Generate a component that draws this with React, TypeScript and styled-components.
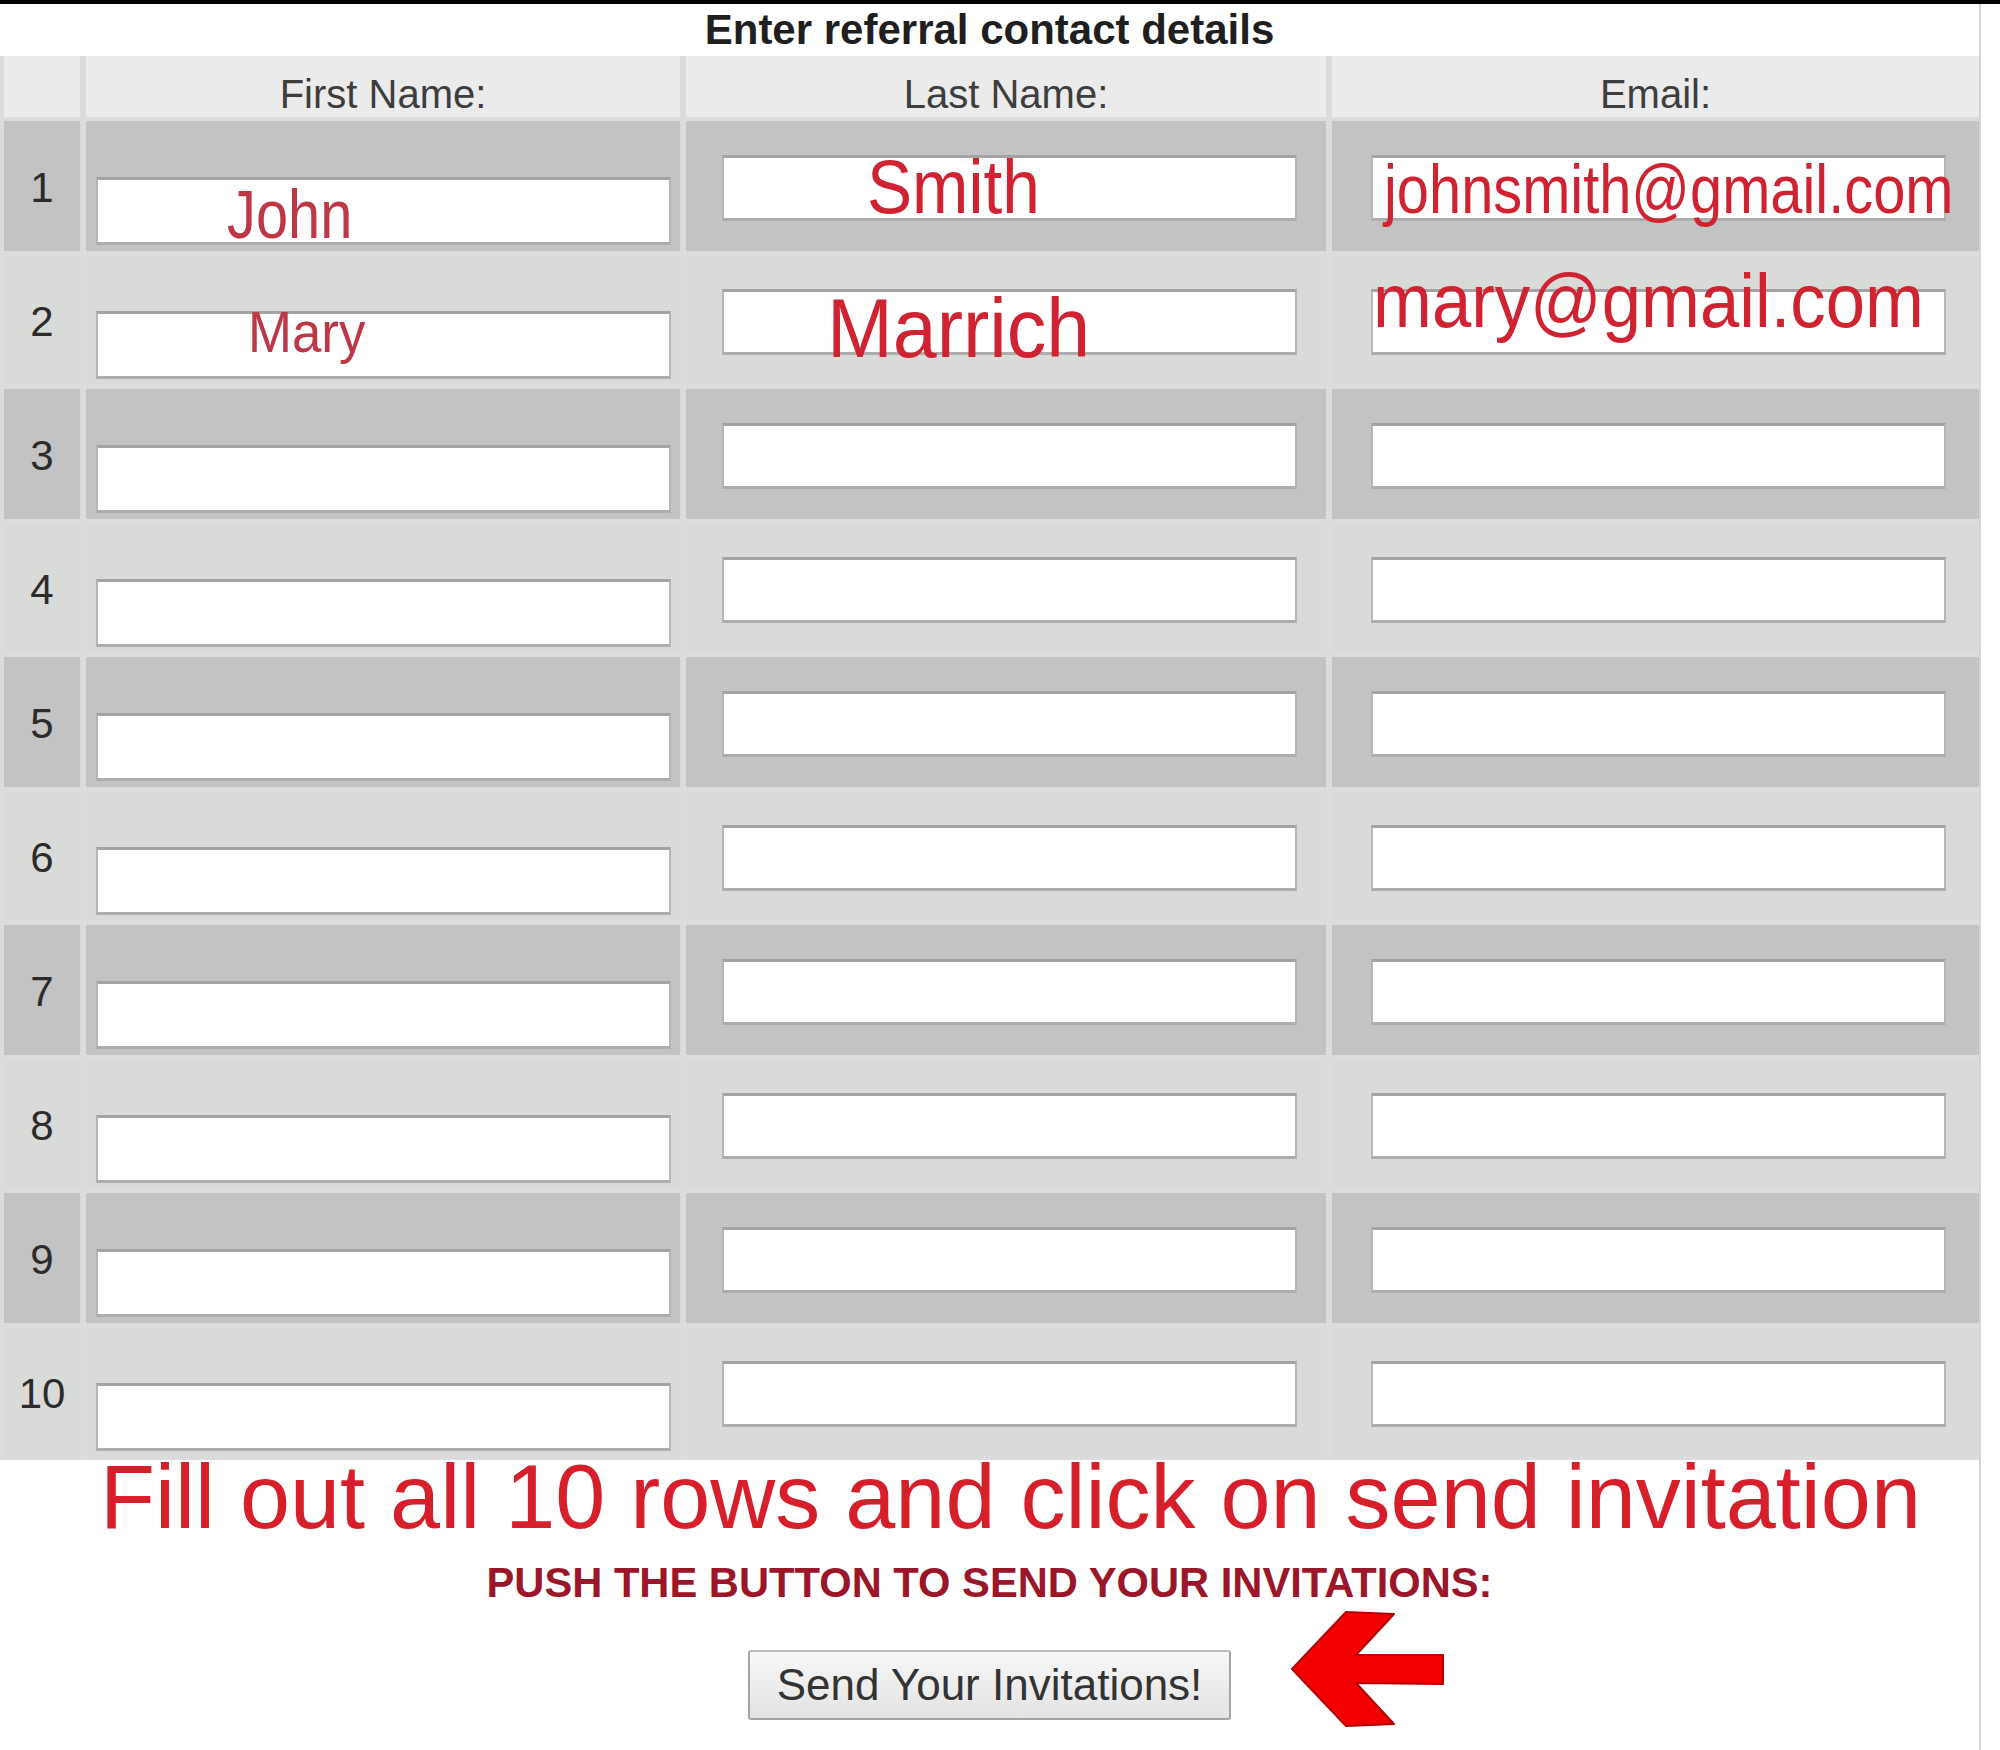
import React from "react";
import styled, { createGlobalStyle } from "styled-components";

const GlobalStyle = createGlobalStyle`
  html, body { margin: 0; padding: 0; background: #ffffff; }
  body { font-family: "Liberation Sans", Arial, sans-serif; }
  *, *::before, *::after { box-sizing: border-box; }
`;

const Page = styled.div`
  width: 2000px;
  min-height: 1750px;
  background: #ffffff;
  border-top: 4px solid #000000;
`;

const Sheet = styled.main`
  width: 1981px;
  min-height: 1746px;
  border-right: 2px solid #d4d4d4;
  display: flex;
  flex-direction: column;
`;

const Title = styled.h1`
  margin: 0;
  height: 52px;
  line-height: 52px;
  text-align: center;
  font-size: 42px;
  font-weight: 700;
  color: #1f1f1f;
`;

const Table = styled.div`
  display: flex;
  flex-direction: column;
  gap: 4px;
  padding-bottom: 3px;
  background: #dcdcdc;
`;

const Row = styled.div<{ $header?: boolean }>`
  display: grid;
  grid-template-columns: 76px 594px 640px 1fr;
  column-gap: 6px;
  padding-left: 4px;
  height: ${(p) => (p.$header ? 61 : 130)}px;
`;

const HeaderCell = styled.div`
  background: #ebebeb;
  display: flex;
  justify-content: center;
  align-items: center;
  padding-top: 14px;
  font-size: 40px;
  line-height: 40px;
  color: #3d3d3d;
`;

const NumCell = styled.div<{ $dark: boolean }>`
  background: ${(p) => (p.$dark ? "#c3c3c3" : "#d9dbd9")};
  display: flex;
  justify-content: center;
  align-items: center;
  padding-top: 4px;
  font-size: 42px;
  line-height: 42px;
  color: #2b2b2b;
`;

const FieldCell = styled.div<{ $dark: boolean; $low?: boolean; $inset: number }>`
  background: ${(p) => (p.$dark ? "#c3c3c3" : "#d9dbd9")};
  display: flex;
  align-items: ${(p) => (p.$low ? "flex-end" : "flex-start")};
  padding-left: ${(p) => p.$inset}px;
  padding-top: ${(p) => (p.$low ? 0 : 34)}px;
  padding-bottom: ${(p) => (p.$low ? 6 : 0)}px;
`;

const Field = styled.div<{ $tall?: boolean }>`
  width: 575px;
  height: ${(p) => (p.$tall ? 68 : 66)}px;
  background: #ffffff;
  border: 2px solid #b6b6b6;
  border-top: 3px solid #a3a3a3;
  border-bottom: 3px solid #adadad;
  display: flex;
  align-items: flex-start;
  overflow: visible;
`;

const Value = styled.span<{ $size: number; $scale: number; $x: number; $y: number; $muted?: boolean }>`
  flex-shrink: 0;
  white-space: nowrap;
  font-size: ${(p) => p.$size}px;
  line-height: 1;
  margin-left: ${(p) => p.$x}px;
  margin-top: ${(p) => p.$y}px;
  color: ${(p) => (p.$muted ? "#bd3747" : "#cf2331")};
  transform: scaleX(${(p) => p.$scale});
  transform-origin: left top;
`;

const Note = styled.p`
  margin: -3px 0 0;
  padding-left: 42px;
  text-align: center;
  font-size: 90px;
  line-height: 80px;
  color: #d61f2b;
  white-space: nowrap;
`;

const Push = styled.p`
  margin: 25px 0 0;
  text-align: center;
  font-size: 41.7px;
  line-height: 41px;
  font-weight: 700;
  color: #9c1629;
  white-space: nowrap;
`;

const ButtonRow = styled.div`
  margin-top: 47px;
  display: grid;
  grid-template-columns: 1fr auto 1fr;
`;

const SendButton = styled.button`
  grid-column: 2;
  width: 483px;
  height: 70px;
  padding: 0;
  border: 2px solid #a4a4a4;
  border-top-color: #bdbdbd;
  border-radius: 3px;
  background: linear-gradient(#f7f7f7, #e3e3e3);
  font-family: "Liberation Sans", Arial, sans-serif;
  font-size: 44px;
  color: #333333;
  cursor: pointer;
`;

const Arrow = styled.svg`
  grid-column: 3;
  justify-self: start;
  align-self: start;
  margin-left: 59px;
  margin-top: -42px;
  width: 155px;
  height: 122px;
`;

type Entry = { text: string; size: number; scale: number; x: number; y: number; muted?: boolean };
type RowData = { first?: Entry; last?: Entry; email?: Entry };

const rows: RowData[] = [
  {
    first: { text: "John", size: 68, scale: 0.85, x: 129, y: 0, muted: true },
    last: { text: "Smith", size: 76, scale: 0.89, x: 143, y: -9 },
    email: { text: "johnsmith@gmail.com", size: 68, scale: 0.85, x: 11, y: -3 },
  },
  {
    first: { text: "Mary", size: 58, scale: 0.91, x: 150, y: -11, muted: true },
    last: { text: "Marrich", size: 84, scale: 0.94, x: 103, y: -6 },
    email: { text: "mary@gmail.com", size: 76, scale: 0.93, x: 0, y: -29 },
  },
  {}, {}, {}, {}, {}, {}, {}, {},
];

const Val = ({ e }: { e?: Entry }) =>
  e ? (
    <Value $size={e.size} $scale={e.scale} $x={e.x} $y={e.y} $muted={e.muted}>
      {e.text}
    </Value>
  ) : null;

export default function App() {
  return (
    <Page>
      <GlobalStyle />
      <Sheet>
        <Title>Enter referral contact details</Title>
        <Table>
          <Row $header>
            <HeaderCell />
            <HeaderCell>First Name:</HeaderCell>
            <HeaderCell>Last Name:</HeaderCell>
            <HeaderCell>Email:</HeaderCell>
          </Row>
          {rows.map((r, i) => {
            const dark = i % 2 === 0;
            return (
              <Row key={i}>
                <NumCell $dark={dark}>{i + 1}</NumCell>
                <FieldCell $dark={dark} $low $inset={10}>
                  <Field $tall>
                    <Val e={r.first} />
                  </Field>
                </FieldCell>
                <FieldCell $dark={dark} $inset={36}>
                  <Field>
                    <Val e={r.last} />
                  </Field>
                </FieldCell>
                <FieldCell $dark={dark} $inset={39}>
                  <Field>
                    <Val e={r.email} />
                  </Field>
                </FieldCell>
              </Row>
            );
          })}
        </Table>
        <Note>Fill out all 10 rows and click on send invitation</Note>
        <Push>PUSH THE BUTTON TO SEND YOUR INVITATIONS:</Push>
        <ButtonRow>
          <SendButton type="button">Send Your Invitations!</SendButton>
          <Arrow viewBox="0 0 155 122" aria-hidden="true">
            <polygon
              points="2,61 56,4 104,6 66,47 153,47 153,76 66,75 104,116 56,118"
              fill="#f20000"
              stroke="#b30000"
              strokeWidth="2"
              strokeLinejoin="round"
            />
          </Arrow>
        </ButtonRow>
      </Sheet>
    </Page>
  );
}
